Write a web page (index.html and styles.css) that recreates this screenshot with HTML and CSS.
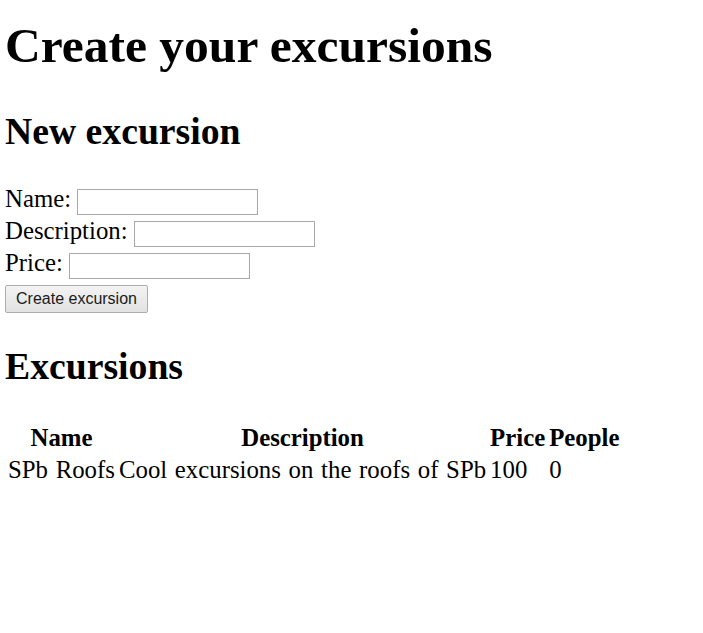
FILE: index.html
```html
<!DOCTYPE html>
<html>
<head>
<meta charset="utf-8">
<title>Excursions</title>
<link rel="stylesheet" href="styles.css">
</head>
<body>
<h1 class="title">Create your excursions</h1>
<h2 class="section section-new">New excursion</h2>
<form class="form">
  <div class="row"><label class="label">Name:</label><input class="field" type="text"></div>
  <div class="row"><label class="label">Description:</label><input class="field" type="text"></div>
  <div class="row"><label class="label">Price:</label><input class="field" type="text"></div>
  <div class="row"><button class="btn" type="button">Create excursion</button></div>
</form>
<h2 class="section section-list">Excursions</h2>
<table class="table">
  <thead>
    <tr><th>Name</th><th>Description</th><th>Price</th><th>People</th></tr>
  </thead>
  <tbody>
    <tr><td>SPb Roofs</td><td>Cool excursions on the roofs of SPb</td><td>100</td><td>0</td></tr>
  </tbody>
</table>
</body>
</html>
```
FILE: styles.css
```css
html, body {
  background: #fff;
}
body {
  margin: 0 5px;
  font-family: "Liberation Serif", "Times New Roman", serif;
  font-size: 24.8px;
  color: #000;
}
.title {
  font-size: 49.5px;
  font-weight: bold;
  margin: 18px 0 0;
  line-height: 55px;
}
.section {
  font-size: 37.7px;
  font-weight: bold;
  line-height: 41px;
  margin: 0;
}
.section-new {
  margin-top: 38px;
}
.section-list {
  margin-top: 33px;
}
.form {
  margin: 33px 0 0;
}
.row {
  display: flex;
  align-items: flex-start;
  height: 32px;
}
.label {
  line-height: 28px;
}
.field {
  box-sizing: border-box;
  width: 181px;
  height: 26px;
  margin: 4px 0 0 6px;
  border: 1px solid #a9a9a9;
  background: #fff;
  padding: 0 2px;
  font-size: 16px;
}
.btn {
  box-sizing: border-box;
  height: 28px;
  width: 143px;
  margin-top: 4px;
  padding: 0;
  border: 1px solid #adadad;
  border-radius: 2px;
  background: linear-gradient(#f3f3f3, #e2e2e2);
  font-family: "Liberation Sans", Arial, sans-serif;
  font-size: 16px;
  color: #1a1a1a;
}
.table {
  margin-top: 34px;
  border-spacing: 2px;
  font-size: 24.8px;
}
.table th, .table td {
  padding: 1px;
  line-height: 28px;
}
.table th {
  font-weight: bold;
  text-align: center;
}
.table td {
  text-align: left;
  word-spacing: 1.5px;
}
```
